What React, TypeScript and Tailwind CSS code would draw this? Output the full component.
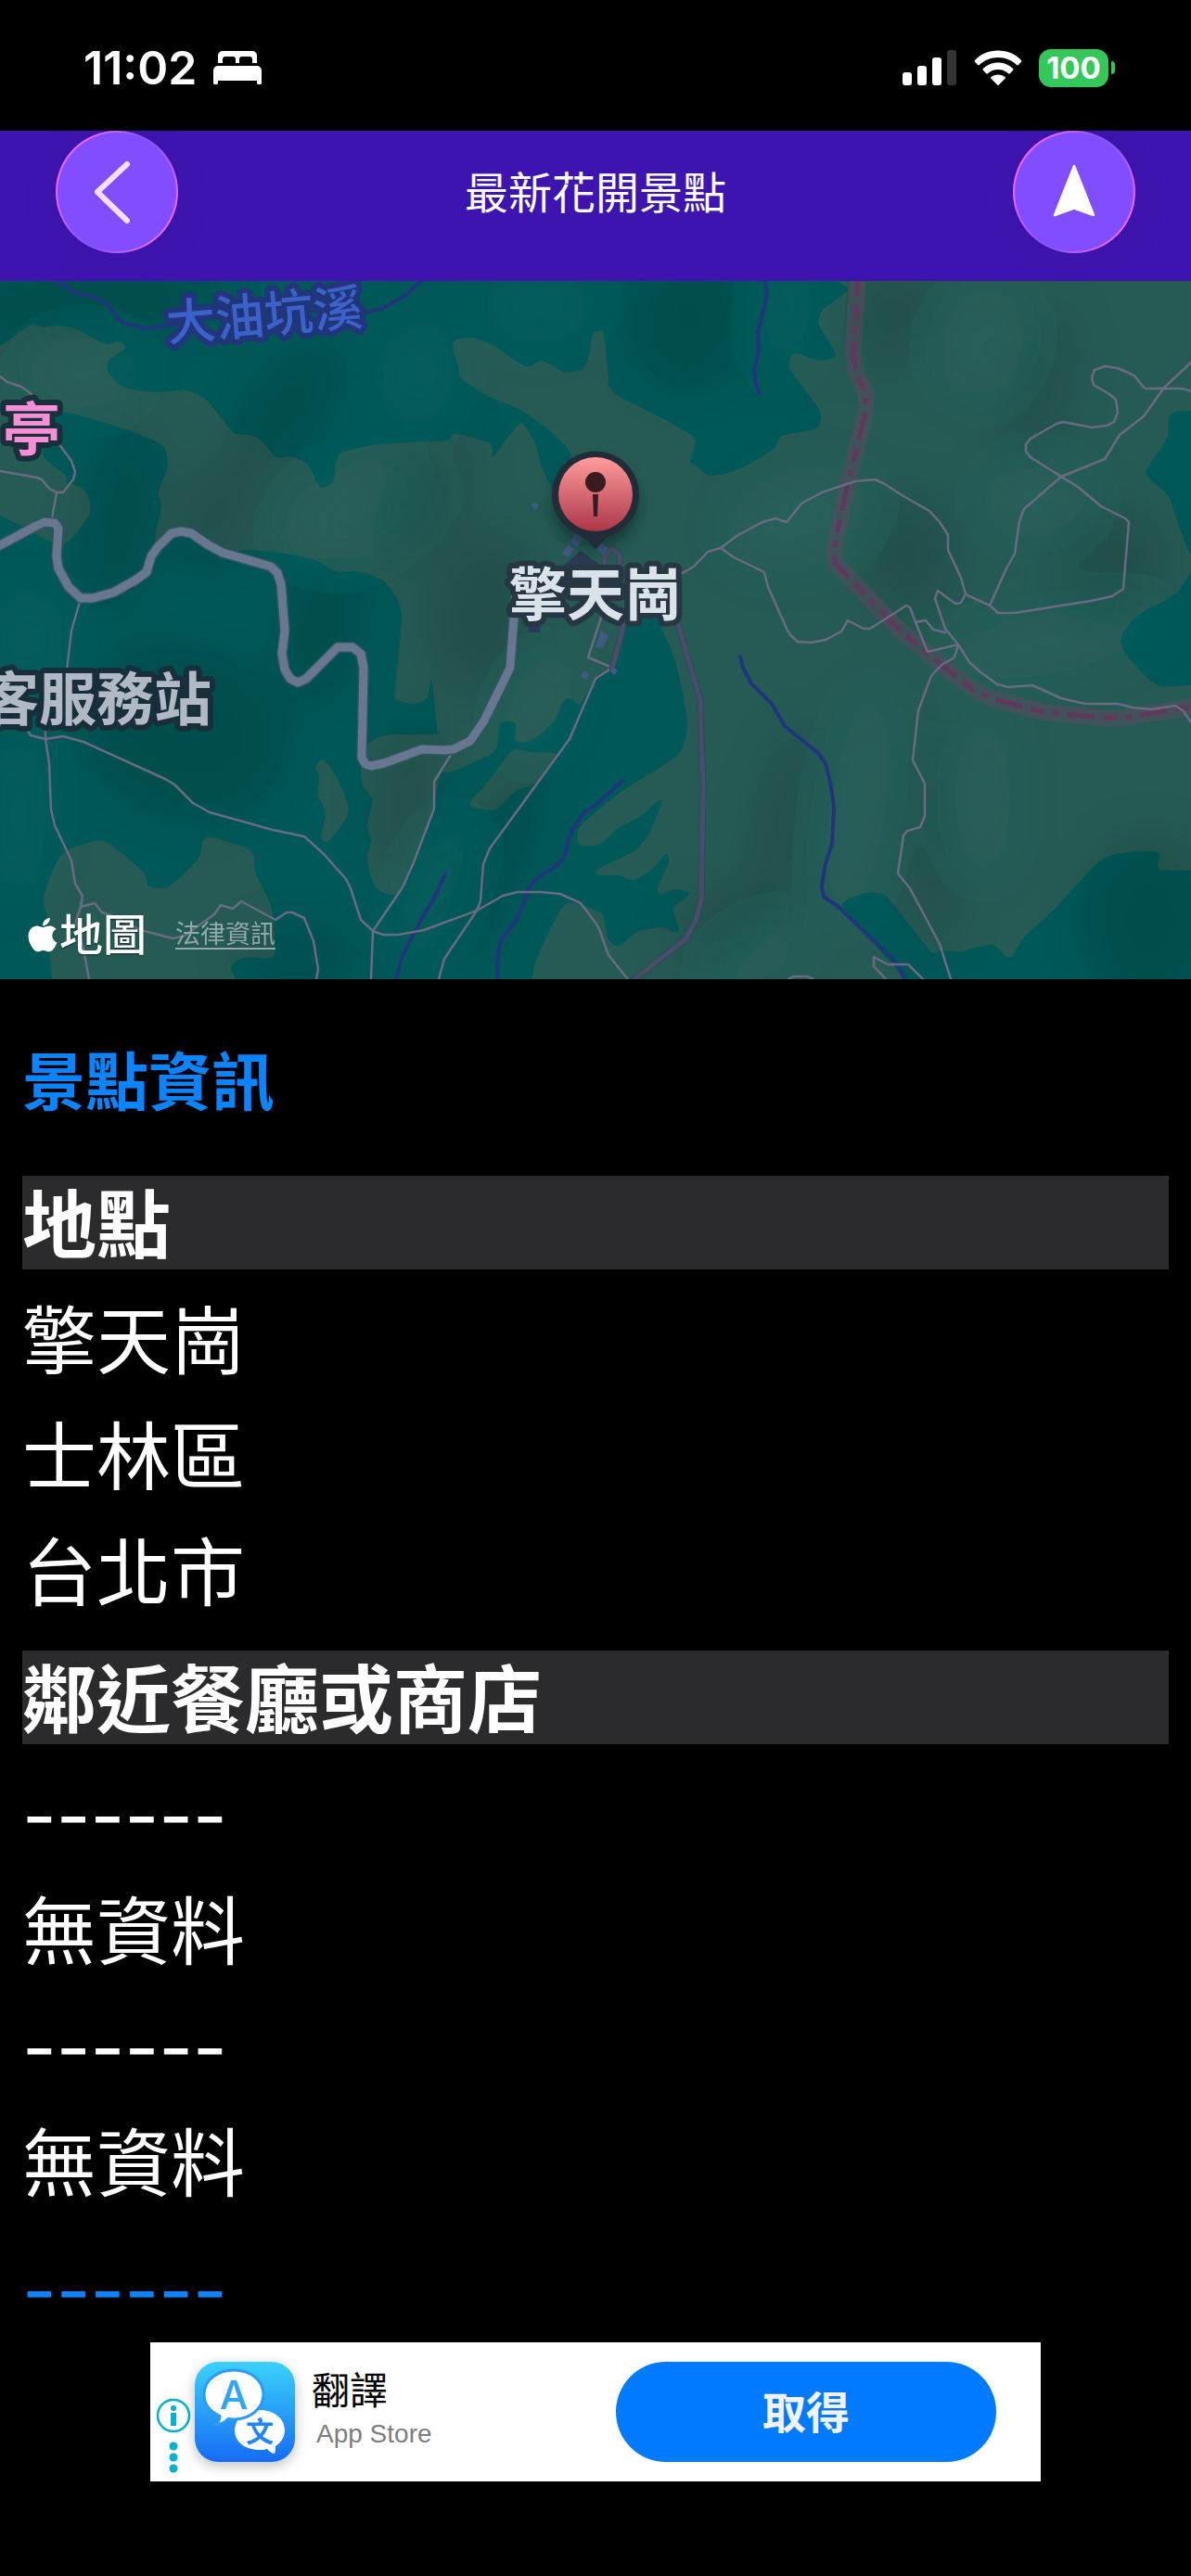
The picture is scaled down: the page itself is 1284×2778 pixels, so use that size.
import { FaApple } from 'react-icons/fa';

type Point = [number, number];

const toPoints = (data: string): Point[] =>
    data.trim().split(/\s+/).map(p => p.split(',').map(Number) as Point);

// Closed soft outline through every point (Catmull-Rom)
const area = (data: string) => {
    const pts = toPoints(data);
    const n = pts.length;
    let d = `M${pts[0][0]},${pts[0][1]}`;
    for (let i = 0; i < n; i++) {
        const a = pts[(i + n - 1) % n];
        const b = pts[i];
        const c = pts[(i + 1) % n];
        const e = pts[(i + 2) % n];
        d += `C${b[0] + (c[0] - a[0]) / 8},${b[1] + (c[1] - a[1]) / 8} ${c[0] - (e[0] - b[0]) / 8},${c[1] - (e[1] - b[1]) / 8} ${c[0]},${c[1]}`;
    }
    return d + 'Z';
};

const GRASSLAND = [
    `-30,390 0,373 33,351 47,353 61,351 82,355 113,371 127,368 135,375 118,388 116,400 132,417 168,423 201,421 223,432 250,465 256,468 278,472 298,493 311,492 331,500 344,524 352,525 360,518 362,500 369,488 409,479 479,475 491,468 528,478 531,493 541,480 557,460 564,457 577,478 584,503 600,530
     616,493 596,467 561,442 532,430 505,414 495,405 494,393 489,380 489,368 497,365 512,365 531,372 567,395 584,389 608,401 628,398 635,383 639,360 649,357 652,367 656,407 656,415 667,427 716,452 749,473 744,497 751,503 766,513 794,507 822,492 836,482 843,470 877,463 885,453 882,440 855,403 850,392 858,381 884,389 901,383 888,360 882,347 888,333 914,313 920,290
     1320,290 1310,443 1284,443 1268,444 1260,450 1258,473 1238,503 1237,513 1258,533 1264,545 1273,573 1284,598 1300,610 1284,617 1268,640 1228,663 1212,680 1208,692 1215,707 1236,730 1252,740 1284,739 1320,739 1320,939 1284,939 1252,938 1248,933 1250,920 1232,918 1203,921 1182,932 1137,980 1105,1010 1092,1030 1086,1032 1074,1021 1066,1019 1035,1026 1015,1025 1006,1028 998,1020 957,968 945,963 933,963 908,977 945,1020 955,1075
     570,1075 573,1056 579,1033 598,993 610,975 626,975 642,982 650,987 656,1013 667,1020 687,1005 712,1000 726,1005 732,1002 726,980 740,968 742,962 726,959 713,964 709,957 721,930 718,921 703,937 683,949 667,944 645,944 645,937 683,918 699,900 713,867 710,863 691,880 667,893 650,908 642,912 626,912 623,907 624,893 642,876 671,853 726,818 737,803 741,780 734,737 726,707 714,680 708,668 675,668 671,690 659,722 642,732
     626,759 614,753 606,758 598,777 581,793 571,799 556,799 556,781 547,778 539,781 536,803 528,814 485,833 475,835 467,873 446,930 428,964 405,957 396,927 400,907 396,890 401,863 391,847 389,830 393,807 414,793 469,792 471,785 465,733 461,752 446,759 426,754 426,743 432,680 433,667 430,650 414,627 389,617 362,616 340,604 307,597 272,593 242,594 200,575 168,583 174,547 171,530 181,503 178,485 170,477 135,463 70,445 50,462 47,492 70,512 72,522 78,522 92,530 97,553 68,587 23,567 0,556 -30,540`,
    '348,819 362,837 375,867 373,883 354,907 346,903 351,877 343,857 344,838 340,828',
    '557,808 573,811 600,814 577,845 557,852 536,872 524,873 508,870 508,862 522,848 549,813',
    '102,907 119,911 154,940 160,955 172,958 184,955 213,927 219,907 229,903 268,916 274,927 276,943 293,980 296,1027 287,1033 262,1033 249,1043 245,1070 75,1070 54,1037 57,1010 47,970 66,922',
];

const MAIN_ROAD =
    '-10,594 0,588 39,567 48,563 59,564 63,570 61,600 63,613 74,633 87,645 100,645 122,639 147,625 158,617 163,600 170,590 185,575 195,573 206,575 225,588 240,596 292,611 299,618 303,630 307,680 304,705 307,722 313,732 321,736 330,732 364,698 380,698 389,705 392,720 390,817 394,824 400,826 414,823 455,808 479,809 489,808 507,799 522,777 550,720 553,680 556,640';

const SIDE_ROADS = [
    '650,640 652,600 660,592 668,598 668,636',
    '660,640 700,614 724,640 733,680 755,755 756,797 758,847 756,970 750,993 739,1013 675,1063',
    '674,660 671,680 660,720',
];

const TRAILS = [
    '0,406 8,412 23,417 33,424 41,435 57,463 63,478 77,497 81,509 79,517 68,531 61,531 53,527 45,517 40,515 0,508',
    '61,532 56,559',
    '86,649 77,680 72,723 49,780 49,797 53,823 55,873 59,890 77,928 81,953 89,966 87,978 82,993 90,1023 96,1056',
    '25,780 33,793 49,797 68,794 90,800 178,840 188,846 208,866 226,876 294,895 328,902 349,921 373,948 378,958 389,992 402,1004 413,1008 430,1008 457,1003 514,982 542,966 558,962 583,962 604,964 626,974 642,995 646,1002 656,1030 680,1060',
    '402,1004 400,1056',
    '486,814 468,843 468,872 446,930 434,957 402,1004',
    '650,660 634,709 660,720 642,732 614,797 528,915 521,932 518,972 514,982 479,1034 473,1056',
    '87,978 102,974 110,984 119,987 152,1003 186,1012 199,1009 231,986 238,976 251,980 260,972 297,992 309,984 315,984 328,990 338,1015 343,1045 341,1056',
    '732,620 748,611 763,595 777,591 794,578 822,563 836,559 848,563 864,543 886,531 922,519 943,517 952,521 974,535 1002,551 1013,563 1022,577 1022,593 1036,623 1041,641 1067,653 1076,661 1094,661 1176,648 1199,643 1211,635 1217,563 1213,559 1187,546 1162,525 1144,514 1111,493 1106,487 1106,479 1111,473 1139,457 1146,455 1177,461 1193,459 1201,455 1205,445 1203,431 1196,425 1179,415 1177,407 1180,399 1191,395 1205,397 1223,405 1234,419 1274,419 1282,421 1290,427',
    '1284,391 1255,418 1233,449 1207,469 1191,495 1144,514 1104,549 1099,562 1094,597 1085,613 1067,653',
    '777,591 791,601 824,617 828,633 849,680 852,685 860,692 874,693 890,690 907,681 914,669 931,678 938,678 977,653 981,655 987,671 1000,703 1033,695 1019,678 1008,645 1011,637 1030,651 1036,650 1041,641',
    '987,671 998,669 1006,679 1019,682',
    '1033,695 1045,714 1056,724 1075,738 1087,741 1113,739 1144,753 1170,759 1205,759 1221,763 1241,765 1267,761 1275,766 1284,779',
    '1033,695 1029,709 1015,717 1004,729 990,766 984,820 997,845 997,880 992,892 978,896 974,901 968,942 981,958 1013,1018 1025,1056',
    '955,1056 942,1042 942,1032 957,1040 979,1040 995,1056',
    '850,1056 856,1053 870,1053 877,1056',
];

const STREAMS = [
    '61,303 82,316 100,320 114,326 127,343 134,349 158,354 184,351 229,340 303,335 348,336 393,337 412,333 439,317 454,303',
    '825,303 827,317 817,360 818,378 813,400 815,413 818,424',
    '798,708 801,720 810,737 832,759 846,783 882,812 890,823 896,848 899,870 897,910 889,935 886,956 888,967 904,978 961,1033 969,1042 977,1060',
    '671,842 642,868 631,875 618,892 613,905 610,920 606,928 594,938 583,944 571,956 558,990 541,1013 537,1027 536,1056',
    '480,942 471,963 455,990 434,1030 426,1060',
];

const BORDER =
    '926,290 925,303 922,343 920,380 922,400 933,423 934,440 912,530 899,593 900,607 925,633 970,680 1015,717 1051,745 1072,754 1125,768 1191,774 1211,774 1300,760';

// Hill shading: [cx, cy, rx, ry, rotation]
const SHADOWS = [
    [305, 445, 35, 90, 35], [90, 325, 150, 40, -5], [742, 345, 60, 75, 10], [130, 560, 35, 110, 10],
    [960, 340, 45, 60, 30], [455, 540, 40, 80, 30], [520, 660, 60, 90, 10], [980, 600, 50, 70, 0],
    [845, 890, 30, 110, 10], [1000, 900, 30, 130, -5], [200, 790, 110, 90, 20], [345, 680, 40, 80, 10],
    [530, 930, 25, 120, 25], [780, 1000, 60, 35, -30], [1120, 420, 30, 90, 15], [1190, 610, 70, 60, -20],
    [440, 850, 30, 90, 10], [1240, 990, 70, 90, 0], [230, 560, 40, 60, 20], [320, 1030, 70, 25, 0],
];

const LIGHTS = [
    [1060, 370, 45, 60, 10], [390, 550, 90, 50, -20], [90, 400, 60, 40, 0], [450, 400, 40, 60, 10],
    [850, 330, 25, 80, 5], [580, 330, 60, 40, 0], [860, 560, 80, 50, -20], [925, 870, 30, 130, 8],
    [1060, 860, 30, 90, 0], [1140, 690, 120, 35, -12], [30, 690, 40, 60, 0], [580, 760, 30, 60, 20],
    [470, 960, 30, 80, 20], [1120, 540, 60, 40, 0], [810, 1030, 60, 30, -30], [20, 880, 30, 100, 0],
];

function StatusBar() {
    return (
        <div className="h-[141px] flex items-start justify-between pl-[90px] pr-[82px] pt-[52px]">
            <div className="flex items-center gap-[18px] h-[42px]">
                <span className="text-[50px] leading-[42px] font-semibold">11:02</span>
                <svg viewBox="0 0 52 36" className="w-[52px] h-[36px]" fill="white">
                    <path d="M5 13V5a5 5 0 0 1 5-5h32a5 5 0 0 1 5 5v8h-5V9a3 3 0 0 0-3-3H31a3 3 0 0 0-3 3v4h-4V9a3 3 0 0 0-3-3h-8a3 3 0 0 0-3 3v4Z" />
                    <path d="M0 34V21a5 5 0 0 1 5-5h42a5 5 0 0 1 5 5v13a2 2 0 0 1-5 0v-2H5v2a2 2 0 0 1-5 0Z" />
                </svg>
            </div>
            <div className="flex items-center h-[42px]">
                <svg viewBox="0 0 58 38" className="w-[58px] h-[38px] mr-[19px]" fill="white">
                    <rect x="0" y="24" width="10" height="14" rx="3" />
                    <rect x="16" y="17" width="10" height="21" rx="3" />
                    <rect x="32" y="8" width="10" height="30" rx="3" />
                    <rect x="48" y="0" width="10" height="38" rx="3" fill="#333335" />
                </svg>
                <svg viewBox="0 0 52 38" className="w-[52px] h-[38px] mr-[18px]" fill="white">
                    <path d="M26 0.5C36 0.500 45 4.500 51 11q.8.9 0 1.700l-3.200 3.400q-.8.8-1.600 0C41 11 34 8 26 8S11 11 5.800 16.100q-.8.8-1.600 0L1 12.700q-.8-.8 0-1.700C7 4.500 16 .5 26 .5Z" />
                    <path d="M26 13.500c6.500 0 12 2.500 16.200 6.600q.8.8 0 1.600l-3.400 3.600q-.8.8-1.700 0C34 22.500 30.500 21 26 21s-8 1.500-11.100 4.300q-.9.8-1.700 0l-3.400-3.600q-.8-.8 0-1.600C14 16 19.500 13.500 26 13.500Z" />
                    <path d="M26 26.500c3 0 5.500 1 7.500 2.600q.8.8 0 1.700l-6.600 6.700q-.9.800-1.800 0l-6.600-6.700q-.8-.9 0-1.700c2-1.600 4.500-2.600 7.500-2.600Z" />
                </svg>
                <div className="w-[75px] h-[41px] rounded-[13px] bg-[#34c759] flex items-center justify-center text-[33px] font-bold leading-none">
                    100
                </div>
                <div className="w-[4px] h-[14px] ml-[3px] rounded-r-full bg-[#34c759]"></div>
            </div>
        </div>
    );
}

function Header() {
    const button =
        'w-[132px] h-[132px] rounded-full p-[2px] bg-[linear-gradient(120deg,#f266ff_0%,#f266ff_20%,#8a55f8_45%,#8a55f8_55%,#f266ff_85%)] shadow-[0_8px_50px_rgba(0,0,0,0.05)]';
    return (
        <header className="h-[162px] bg-[#3e14b1] flex items-start justify-between px-[60px]">
            <button type="button" aria-label="返回" className={button}>
                <svg viewBox="2 2 128 128" className="w-full h-full rounded-full bg-[#824dff]">
                    <path d="M77 36 45 66 77 97" fill="none" stroke="#ffdcff" strokeWidth="6" strokeLinecap="round" strokeLinejoin="round" />
                </svg>
            </button>
            <h1 className="text-[47px] leading-[134px]">最新花開景點</h1>
            <button type="button" aria-label="導航" className={button}>
                <svg viewBox="2 2 128 128" className="w-full h-full rounded-full bg-[#824dff]">
                    <path d="M66 38 87 91 66 83.500 45 91Z" fill="white" stroke="white" strokeWidth="2.500" strokeLinejoin="round" />
                </svg>
            </button>
        </header>
    );
}

function MapView() {
    return (
        <section className="relative h-[753px] overflow-hidden">
            <svg
                viewBox="0 303 1284 753"
                preserveAspectRatio="xMidYMid slice"
                className="w-full h-full"
                fill="none"
                strokeLinecap="round"
                strokeLinejoin="round"
            >
                <defs>
                    <filter id="haze" x="-100%" y="-100%" width="300%" height="300%">
                        <feGaussianBlur stdDeviation="26" />
                    </filter>
                    <filter id="soft" x="-50%" y="-50%" width="200%" height="200%">
                        <feGaussianBlur stdDeviation="8" />
                    </filter>
                    <linearGradient id="pin" x1="0" y1="0" x2="0" y2="1">
                        <stop offset="0" stopColor="#ff9c9c" />
                        <stop offset="1" stopColor="#ac3648" />
                    </linearGradient>
                </defs>

                <rect x="0" y="303" width="1284" height="753" fill="#005858" />
                {GRASSLAND.map(d => <path key={d} d={area(d)} fill="#265b55" />)}

                <g filter="url(#haze)">
                    {SHADOWS.map(([x, y, rx, ry, r], i) => (
                        <ellipse key={i} cx={x} cy={y} rx={rx} ry={ry} transform={`rotate(${r} ${x} ${y})`} fill="#000" opacity="0.12" />
                    ))}
                    {LIGHTS.map(([x, y, rx, ry, r], i) => (
                        <ellipse key={i} cx={x} cy={y} rx={rx} ry={ry} transform={`rotate(${r} ${x} ${y})`} fill="#2b8080" opacity="0.12" />
                    ))}
                </g>

                {STREAMS.map(d => <polyline key={d} points={d} stroke="#21357c" strokeWidth="4" />)}
                <polyline points={BORDER} stroke="#6b4763" strokeWidth="18" opacity="0.4" />
                <polyline points={BORDER} stroke="#67335f" strokeWidth="5" strokeLinecap="butt" strokeDasharray="30 9 15 9 7 9" opacity="0.85" />
                {TRAILS.map(d => <polyline key={d} points={d} stroke="#6a6a83" strokeWidth="2.500" />)}
                {SIDE_ROADS.map(d => <polyline key={d} points={d} stroke="#364459" strokeWidth="7" />)}
                {SIDE_ROADS.map(d => <polyline key={d} points={d} stroke="#454f68" strokeWidth="5" />)}
                <polyline points={MAIN_ROAD} stroke="#31565f" strokeWidth="12" />
                <polyline points={MAIN_ROAD} stroke="#67778f" strokeWidth="9" />

                {/* buildings around the trailhead */}
                <path d="M598 618 626 594 655 615 640 640 610 640Z" fill="#2b3a50" />
                <path d="M577 541l4 4-4 5-4-5ZM620 574l8 8-6 8-7-6ZM613 587l6 5-7 9-6-5ZM648 584l8 8-6 7-7-8ZM648 680l8 5-6 14-8-2ZM629 723l6 4-3 6-6-3ZM660 719l6 4-4 5-4-4Z" fill="#425984" />
                <path d="M570 672h12v10h-12Z" fill="#2b3a5c" />

                <circle cx="642" cy="545" r="46" fill="#001818" opacity="0.45" filter="url(#soft)" />
                <path d="M642 592c-3 0-8-12-20-16A47 47 0 1 1 662 576C650 580 645 592 642 592Z" fill="#222c38" />
                <circle cx="642" cy="533" r="40" fill="url(#pin)" />
                <circle cx="642" cy="520" r="11" fill="#381c20" />
                <path d="M639 533h6l-1 24h-4Z" fill="#381c20" />

                <g fontFamily='Inter, "Noto Sans CJK TC", sans-serif' fontWeight="700" paintOrder="stroke" strokeWidth="12">
                    <text x="181" y="368" fontSize="53" fontWeight="500" fill="#3b62c9" stroke="#20357a" transform="rotate(-5 181 368)">大油坑溪</text>
                    <text x="3" y="486" fontSize="62" fill="#f78ed6" stroke="#18303c">亭</text>
                    <text x="-20" y="777" fontSize="62" fill="#b0b9c5" stroke="#182f3b">客服務站</text>
                    <text x="642" y="664" fontSize="62" textAnchor="middle" fill="#dce2ea" stroke="#263643">擎天崗</text>
                </g>
            </svg>

            <div className="absolute left-[30px] bottom-[24px] flex items-center">
                <FaApple className="w-[32px] h-[42px]" />
                <span className="ml-[2px] text-[47px] leading-[48px] font-medium [text-shadow:0_1px_2px_#0008]">地圖</span>
                <a href="#legal" className="ml-[31px] text-[27px] leading-[32px] text-[#93a9a7] underline underline-offset-[5px]">
                    法律資訊
                </a>
            </div>
        </section>
    );
}

function SectionTitle({ children }: { children: string }) {
    return <h3 className="h-[101px] leading-[105px] bg-[#2b2b2d] font-bold">{children}</h3>;
}

function Row({ children }: { children: string }) {
    return <p className="h-[101px] leading-[105px]">{children}</p>;
}

function SpotInfo() {
    return (
        <main className="px-[24px] pt-[60px]">
            <h2 className="h-[100px] text-[68px] leading-[102px] font-bold text-[#0a84ff]">景點資訊</h2>
            <div className="mt-[52px] flex flex-col gap-[24px] text-[80px]">
                <SectionTitle>地點</SectionTitle>
                <Row>擎天崗</Row>
                <Row>士林區</Row>
                <Row>台北市</Row>
            </div>
            <div className="mt-[36px] flex flex-col gap-[24px] text-[80px]">
                <SectionTitle>鄰近餐廳或商店</SectionTitle>
                <Row>------</Row>
                <Row>無資料</Row>
                <Row>------</Row>
                <Row>無資料</Row>
            </div>
            <div className="mt-[36px] text-[80px] text-[#0a84ff]">
                <Row>------</Row>
            </div>
        </main>
    );
}

function AdBanner() {
    return (
        <aside className="mx-auto mt-[8px] w-full max-w-[960px] h-[150px] bg-white flex items-center">
            <button type="button" aria-label="廣告資訊" className="w-[48px] h-full">
                <svg viewBox="0 0 48 150" className="w-full h-full" fill="#00b1d2">
                    <circle cx="25" cy="79" r="17" fill="none" stroke="#00b1d2" strokeWidth="2.500" />
                    <circle cx="25" cy="71" r="3" />
                    <rect x="22" y="76" width="6" height="14" />
                    <circle cx="25" cy="112" r="4.500" />
                    <circle cx="25" cy="124" r="4.500" />
                    <circle cx="25" cy="136" r="4.500" />
                </svg>
            </button>
            <svg viewBox="0 0 108 108" className="w-[108px] h-[108px] rounded-[25px] shadow-[0_4px_14px_rgba(0,0,0,0.25)]">
                <defs>
                    <linearGradient id="translate" x1="0" y1="0" x2="0" y2="1">
                        <stop offset="0" stopColor="#3bd2fb" />
                        <stop offset="1" stopColor="#156cf5" />
                    </linearGradient>
                </defs>
                <rect width="108" height="108" fill="url(#translate)" />
                <path d="M70 52c15 0 27 9 27 22 0 7-4 13-10 17 0 3 0 5-1 8-3 0-6-3-8-5-3 1-5 1-8 1-15 0-27-8-27-21s12-22 27-22Z" fill="white" />
                <path d="M42 9c18 0 32 11 32 26S60 62 42 62c-2 0-4 0-6-.500-3 3-8 6-13 6 3-3 4-6 4-9C17 54 10 46 10 35 10 20 24 9 42 9Z" fill="white" stroke="#2a9bf8" strokeWidth="3" />
                <text x="42" y="51" textAnchor="middle" fontSize="43" fontWeight="500" fontFamily="Inter, sans-serif" fill="#2fa4f8">A</text>
                <text x="70" y="86" textAnchor="middle" fontSize="30" fontWeight="700" fontFamily='"Noto Sans CJK TC", sans-serif' fill="#2384f7">文</text>
            </svg>
            <div className="ml-[18px] pb-[6px] flex flex-col text-black">
                <span className="text-[41px] leading-[54px]">翻譯</span>
                <span className="ml-[5px] text-[28px] leading-[40px] text-[#7d7d7d] font-['Liberation_Sans',sans-serif]">App Store</span>
            </div>
            <button
                type="button"
                className="ml-auto mr-[48px] w-[410px] h-[108px] rounded-full bg-[#007aff] pt-[2px] text-[47px] font-bold text-[#f2f2f7]"
            >
                取得
            </button>
        </aside>
    );
}

export default function App() {
    return (
        <div lang="zh-Hant" className="min-h-screen bg-black text-white font-[Inter,'Noto_Sans_CJK_TC',sans-serif]">
            <StatusBar />
            <Header />
            <MapView />
            <SpotInfo />
            <AdBanner />
        </div>
    );
}
